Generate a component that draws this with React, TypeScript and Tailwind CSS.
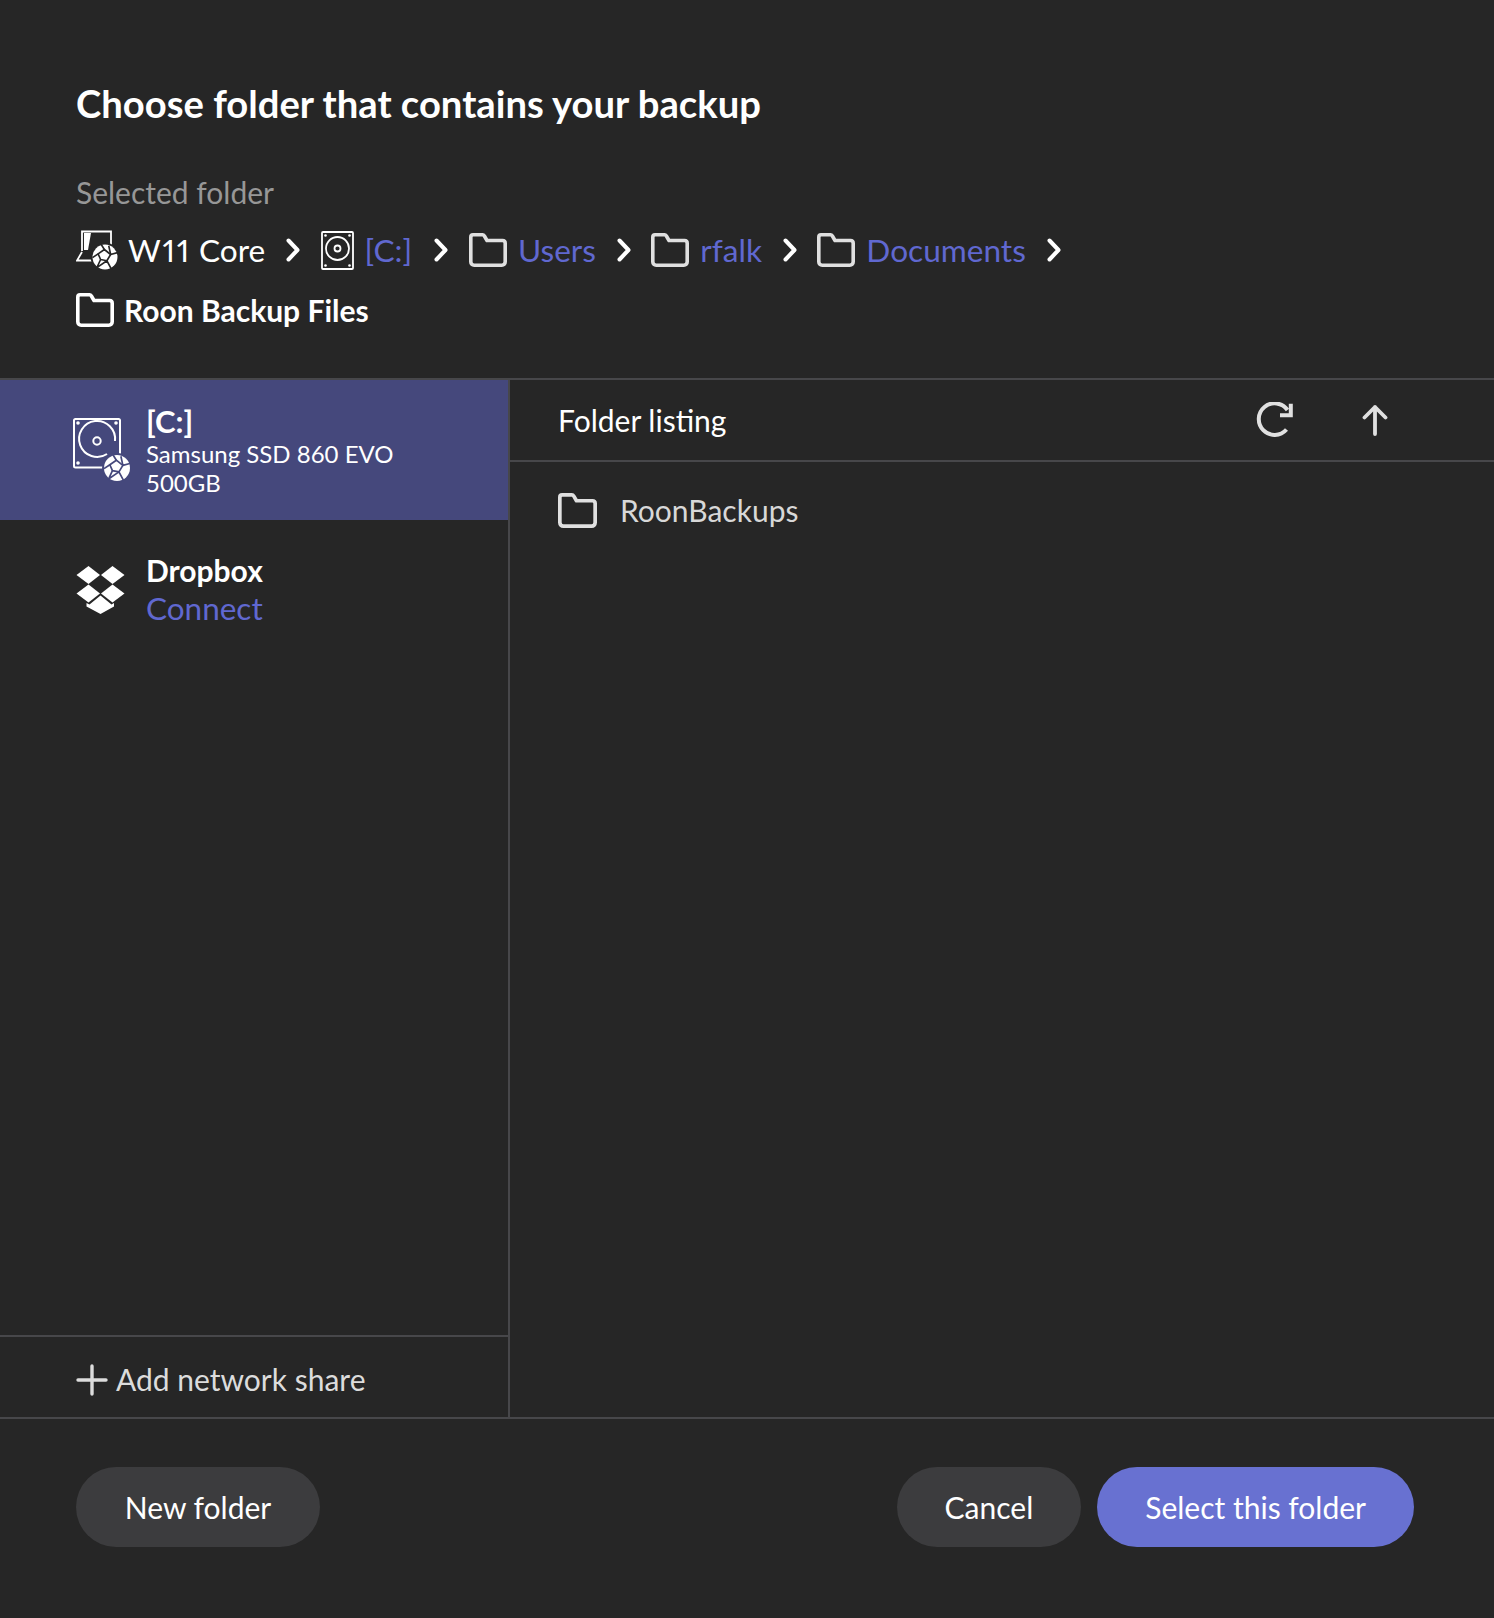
import React from "react";

const Folder = ({ className = "" }: { className?: string }) => (
  <svg viewBox="0 0 38 34" fill="none" stroke="currentColor" strokeWidth="3.6" strokeLinejoin="round" className={className}>
    <path d="M4 1.800h9.500c1 0 1.400.4 1.900 1.200L18 7.500h15.500c1.600 0 2.700 1.100 2.700 2.700v18.600c0 2-1.400 3.400-3.400 3.400H5.200c-2 0-3.400-1.400-3.400-3.400V4c0-1.300.9-2.200 2.200-2.200z" />
  </svg>
);

const Chevron = () => (
  <svg viewBox="0 0 14 24" fill="none" stroke="#fff" strokeWidth="4" strokeLinecap="round" strokeLinejoin="round" className="w-[14px] h-[24px] shrink-0">
    <path d="M2.500 2.500 11.500 12 2.500 21.500" />
  </svg>
);

const Globe = ({ cx, cy, r, bg }: { cx: number; cy: number; r: number; bg: string }) => (
  <g transform={`translate(${cx} ${cy}) scale(${r / 10})`}>
    <circle r="11.500" fill={bg} />
    <circle r="10" fill="#fff" />
    <g stroke={bg} strokeWidth="1.300" fill="none" strokeLinejoin="round">
      <path d="M-5.500-2.500-.5-6 4.500-2 1.500 3-3.500 2z" />
      <path d="M-10 .5-5.500-2.500M-.5-6-3-10M4.500-2 10-3.500M1.500 3 5 9.500M-3.500 2-6.500 8.500M1.500 3-6.500 8.500M4.500-2 3-9" />
    </g>
  </g>
);

const Hdd = () => (
  <svg viewBox="0 0 33 39" fill="none" className="w-[33px] h-[39px] shrink-0">
    <rect x="1" y="1" width="31" height="37" rx="1" stroke="#fff" strokeWidth="1.800" />
    <circle cx="16.500" cy="17.500" r="11.500" stroke="#fff" strokeWidth="1.800" />
    <circle cx="16.500" cy="17.500" r="3" stroke="#fff" strokeWidth="1.800" />
    <circle cx="4.500" cy="4.500" r="1.300" fill="#fff" />
    <circle cx="28.500" cy="4.500" r="1.300" fill="#fff" />
    <circle cx="4.500" cy="34.500" r="1.300" fill="#fff" />
    <circle cx="28.500" cy="34.500" r="1.300" fill="#fff" />
  </svg>
);

const HostIcon = () => (
  <svg viewBox="0 0 42 40" fill="none" className="w-[42px] h-[40px] shrink-0">
    <path d="M6 21V1.500h29v15" stroke="#fff" strokeWidth="1.800" />
    <path d="M6 22 1 30.500h17" stroke="#fff" strokeWidth="1.800" />
    <path d="M8 3h7l-3 17H8z" fill="#fff" />
    <Globe cx={29} cy={27} r={12.500} bg="#262626" />
  </svg>
);

const HddBadge = () => (
  <svg viewBox="0 0 58 66" fill="none" className="w-[58px] h-[66px] shrink-0 -mr-[2px]">
    <path d="M37 50.500H3.500c-1 0-1.500-.5-1.500-1.500V3.500c0-1 .5-1.500 1.500-1.500h43c1 0 1.500.5 1.500 1.500V38" stroke="#fff" strokeWidth="2" />
    <path d="M35 37A18 18 0 1 1 43 24" stroke="#fff" strokeWidth="2" />
    <circle cx="25" cy="24" r="3.700" stroke="#fff" strokeWidth="2" />
    <circle cx="6" cy="6" r="1.800" fill="#fff" />
    <circle cx="44" cy="6" r="1.800" fill="#fff" />
    <circle cx="6" cy="46" r="1.800" fill="#fff" />
    <Globe cx={45} cy={51} r={13} bg="#45487c" />
  </svg>
);

const DropboxIcon = () => (
  <svg viewBox="0 0 49 48" fill="#fff" className="w-[49px] h-[48px] shrink-0 mt-[2px]">
    <path d="M12.500 0 24 9 12.500 18 .5 9z" />
    <path d="M36.500 0 48.500 9 36.500 18 25 9z" />
    <path d="M12.500 18.500 24 27.500 12.500 36.500 .5 27.500z" />
    <path d="M36.500 18.500 48.500 27.500 36.500 36.500 25 27.500z" />
    <path d="M24.500 29.500 35.500 38.500 38 37v3.500L24.500 48 10.500 40.500V37l3 1.500z" />
  </svg>
);

const Crumb = ({ icon, label, className = "" }: { icon: React.ReactNode; label: string; className?: string }) => (
  <div className={`flex items-center gap-[11px] ${className}`}>
    {icon}
    <span className="text-[#6068d0]">{label}</span>
  </div>
);

const crumbIcon = <Folder className="w-[38px] h-[34px] shrink-0 text-[#e0e0e0]" />;

function Button({ label, primary, className = "" }: { label: string; primary?: boolean; className?: string }) {
  return (
    <button className={`h-[80px] px-[48px] rounded-full text-[30px] text-white ${primary ? "bg-[#6871d1]" : "bg-[#3c3c3e]"} ${className}`}>
      {label}
    </button>
  );
}

export default function App() {
  return (
    <div className="w-[1494px] h-[1618px] bg-[#262626] text-white flex flex-col font-['Lato','Liberation_Sans',sans-serif]">
      <header className="h-[378px] shrink-0 pl-[76px] pt-[78px]">
        <h1 className="text-[38.200px] leading-[50px] font-bold">Choose folder that contains your backup</h1>
        <p className="mt-[44px] text-[30px] leading-[40px] text-[#979797]">Selected folder</p>
        <div className="mt-[18px] flex flex-wrap items-center gap-x-[20.700px] gap-y-[20px] max-w-[1100px] text-[31.600px] leading-[40px]">
          <div className="flex items-center gap-[10px]">
            <HostIcon />
            <span>
              <span className="proportional-nums tracking-[1.700px]">W11</span> Core
            </span>
          </div>
          <Chevron />
          <Crumb icon={<Hdd />} label="[C:]" className="mr-[1.500px]" />
          <Chevron />
          <Crumb icon={crumbIcon} label="Users" />
          <Chevron />
          <Crumb icon={crumbIcon} label="rfalk" />
          <Chevron />
          <Crumb icon={crumbIcon} label="Documents" />
          <Chevron />
          <div className="flex items-center gap-[10px] font-bold text-[30px]">
            <Folder className="w-[38px] h-[34px] shrink-0 text-white" />
            <span>Roon Backup Files</span>
          </div>
        </div>
      </header>

      <main className="h-[1041px] shrink-0 flex border-y-2 border-[#47474a]">
        <aside className="w-[510px] shrink-0 flex flex-col border-r-2 border-[#47474a]">
          <div className="h-[140px] shrink-0 bg-[#45487c] pl-[72px] flex items-center gap-[18px]">
            <HddBadge />
            <div className="flex flex-col">
              <span className="text-[31px] leading-[36px] font-bold">[C:]</span>
              <span className="text-[24px] leading-[29px]">Samsung SSD 860 EVO</span>
              <span className="text-[24px] leading-[29px]">500GB</span>
            </div>
          </div>
          <div className="h-[140px] shrink-0 pl-[76px] pb-[2px] flex items-center gap-[21px]">
            <DropboxIcon />
            <div className="flex flex-col">
              <span className="text-[30px] leading-[37px] font-bold">Dropbox</span>
              <span className="text-[31.500px] leading-[38px] text-[#6068d0]">Connect</span>
            </div>
          </div>
          <div className="flex-1" />
          <div className="h-[82px] shrink-0 border-t-2 border-[#47474a] pl-[76px] pt-[5px] flex items-center gap-[8px] text-[#dcdcdc] text-[30px]">
            <svg viewBox="0 0 32 32" stroke="currentColor" strokeWidth="3.400" strokeLinecap="round" className="w-[32px] h-[32px] shrink-0">
              <path d="M2 16h28M16 2v28" />
            </svg>
            <span>Add network share</span>
          </div>
        </aside>
        <section className="flex-1 flex flex-col">
          <div className="h-[82px] shrink-0 border-b-2 border-[#47474a] pl-[48px] pr-[106px] flex items-center justify-between">
            <span className="text-[30px]">Folder listing</span>
            <div className="flex items-center gap-[68px] mb-[1px] text-[#e0e0e0]">
              <svg viewBox="0 0 38 36" fill="none" stroke="currentColor" strokeWidth="4" className="w-[38px] h-[36px]">
                <path d="M30.500 27.500A15.800 15.800 0 1 1 31.500 8" />
                <path d="M34.800 1.800v11.400H24" strokeLinejoin="miter" />
              </svg>
              <svg viewBox="0 0 26 32" fill="none" stroke="currentColor" strokeWidth="3.800" strokeLinecap="round" strokeLinejoin="round" className="w-[26px] h-[32px]">
                <path d="M13 30V3M2.500 13.500 13 3l10.500 10.500" />
              </svg>
            </div>
          </div>
          <div className="pl-[48px] pt-[28px] flex items-center gap-[23px] text-[#d8d8d8] text-[30px] leading-[40px]">
            <Folder className="w-[39px] h-[35px] shrink-0 text-[#e0e0e0]" />
            <span>RoonBackups</span>
          </div>
        </section>
      </main>

      <footer className="flex-1 pl-[76px] pr-[80px] flex items-start justify-between pt-[48px]">
        <Button label="New folder" className="w-[244px]" />
        <div className="flex gap-[16px]">
          <Button label="Cancel" />
          <Button label="Select this folder" primary />
        </div>
      </footer>
    </div>
  );
}
